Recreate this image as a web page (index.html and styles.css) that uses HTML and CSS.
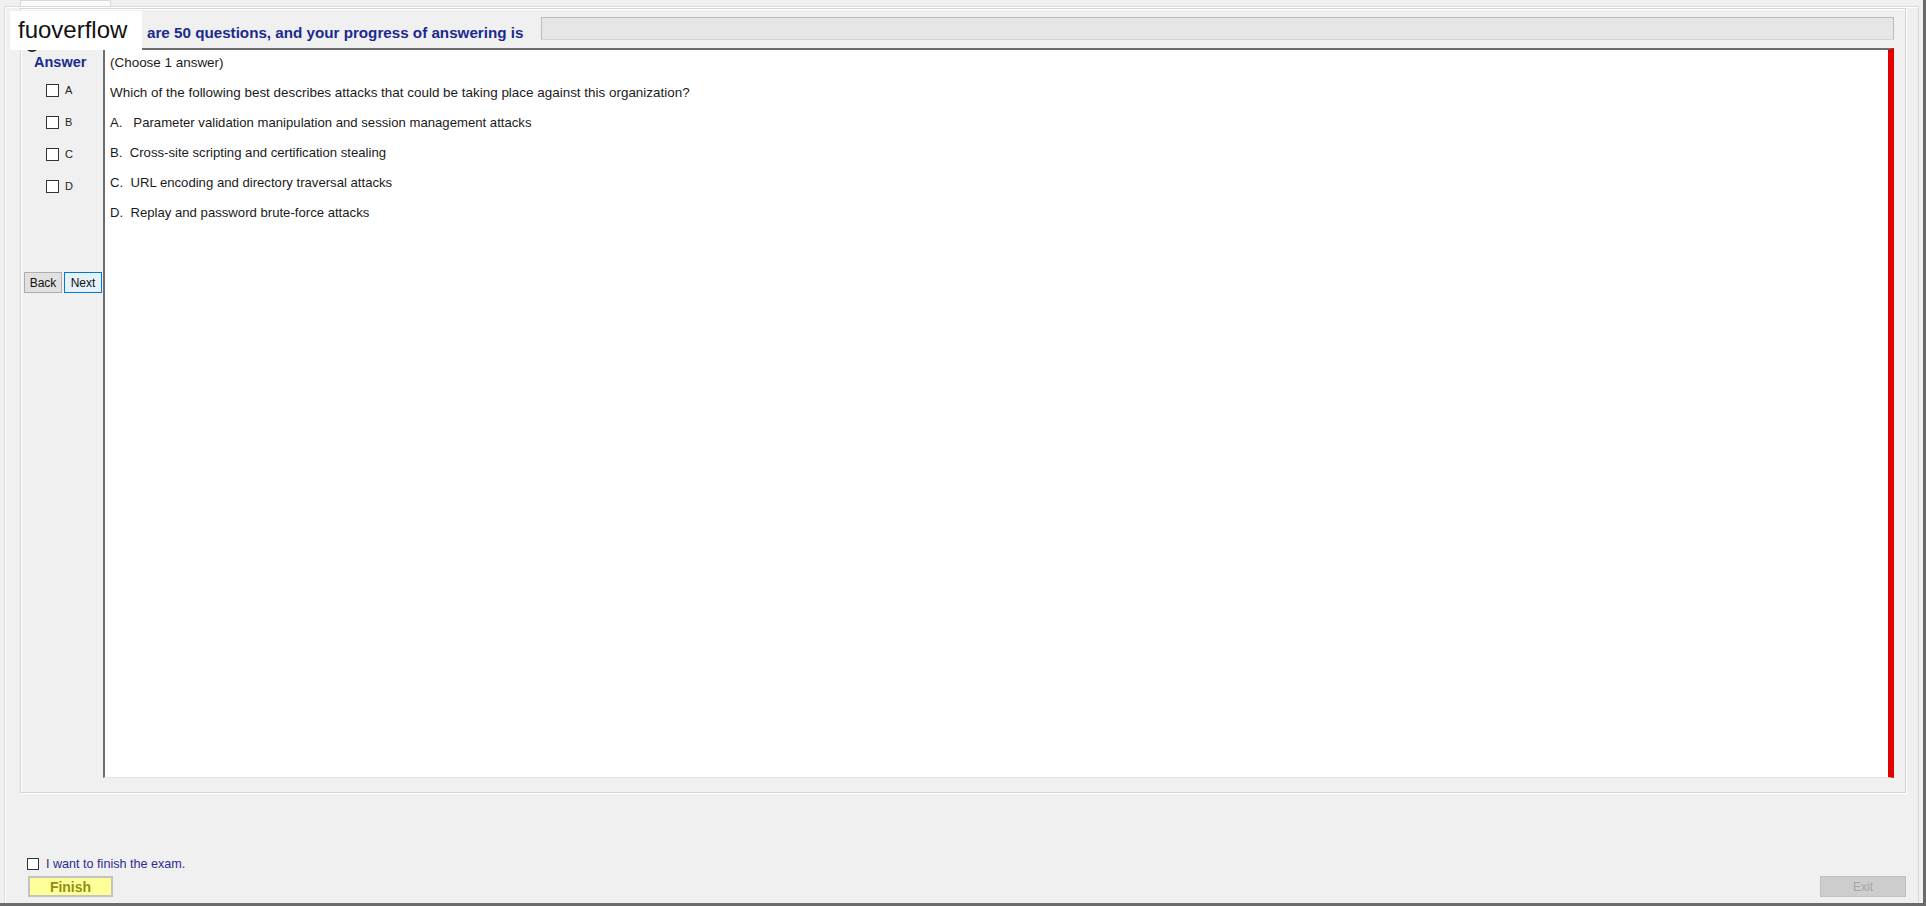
FILE: index.html
```html
<!DOCTYPE html>
<html lang="en">
<head>
    <meta charset="UTF-8">
    <title>Exam</title>
    <link rel="stylesheet" href="styles.css">
</head>
<body>
    <div class="window">
        <div class="tabstrip">
            <div class="tab"></div>
        </div>
        <div class="tabpage">
            <div class="group">
                <div class="header">
                    <span class="icon"></span>
                    <span class="title">are 50 questions, and your progress of answering is</span>
                    <div class="progress"></div>
                </div>
                <div class="body">
                    <div class="side">
                        <div class="answer">Answer</div>
                        <div class="opt"><span class="box"></span><span>A</span></div>
                        <div class="opt"><span class="box"></span><span>B</span></div>
                        <div class="opt"><span class="box"></span><span>C</span></div>
                        <div class="opt"><span class="box"></span><span>D</span></div>
                        <div class="nav">
                            <button class="btn">Back</button>
                            <button class="btn next">Next</button>
                        </div>
                    </div>
                    <div class="question">
                        <p>(Choose 1 answer)</p>
                        <p>Which of the following best describes attacks that could be taking place against this organization?</p>
                        <p class="choice">A.   Parameter validation manipulation and session management attacks</p>
                        <p class="choice">B.  Cross-site scripting and certification stealing</p>
                        <p class="choice">C.  URL encoding and directory traversal attacks</p>
                        <p class="choice">D.  Replay and password brute-force attacks</p>
                    </div>
                </div>
            </div>
            <div class="footer">
                <div class="confirm"><span class="box small"></span><span>I want to finish the exam.</span></div>
                <div class="actions">
                    <button class="finish">Finish</button>
                    <button class="exit">Exit</button>
                </div>
            </div>
        </div>
        <div class="mark">fuoverflow</div>
    </div>
</body>
</html>
```

FILE: styles.css
```css
*{
    box-sizing: border-box;
}
body{
    margin: 0;
    background: #f0f0f0;
    font-family: "Liberation Sans", Arial, sans-serif;
}
.window{
    position: relative;
    display: flex;
    flex-direction: column;
    width: 1926px;
    height: 906px;
    border-right: 3px solid #6b6b6b;
    border-bottom: 3px solid #6b6b6b;
}
.tabstrip{
    height: 6px;
    padding-left: 20px;
}
.tab{
    width: 91px;
    height: 6px;
    background: #fafafa;
    border: 1px solid #d9d9d9;
    border-bottom: none;
}
.tabpage{
    flex: 1;
    display: flex;
    flex-direction: column;
    margin: 0 4px 0 4px;
    padding: 1px 12px 0 15px;
    border-top: 1px solid #d9d9d9;
    border-left: 1px solid #d9d9d9;
    border-right: 1px solid #d9d9d9;
    box-shadow: inset 1px 1px #fff;
}
.group{
    height: 785px;
    display: flex;
    flex-direction: column;
    border: 1px solid #d5d5d5;
    box-shadow: inset 1px 1px #fff, 1px 1px #fff;
}
.header{
    height: 39px;
    display: flex;
    align-items: center;
    padding-left: 3px;
}
.icon{
    align-self: flex-end;
    width: 14px;
    height: 14px;
    margin: 0 0 -4px 1px;
    border-radius: 50%;
    background: #2b2b2b;
}
.title{
    margin: 8px 0 0 108px;
    color: #1b2a8f;
    font-weight: bold;
    font-size: 15.2px;
}
.progress{
    flex: 1;
    height: 23px;
    margin: 0 11px 0 18px;
    background: #e6e6e6;
    border: 1px solid #bcbcbc;
    border-bottom-color: #d4d4d4;
}
.body{
    flex: 1;
    display: flex;
    padding-bottom: 14px;
}
.side{
    width: 82px;
    padding-top: 7px;
}
.answer{
    color: #1b2a8f;
    font-weight: bold;
    font-size: 14.5px;
    line-height: 15px;
    padding-left: 13px;
    margin-bottom: 4px;
}
.opt{
    height: 32px;
    display: flex;
    align-items: center;
    gap: 6px;
    padding-left: 25px;
    font-size: 11px;
    color: #222;
}
.box{
    width: 13px;
    height: 13px;
    background: #fff;
    border: 1px solid #333;
}
.box.small{
    width: 12px;
    height: 12px;
}
.nav{
    display: flex;
    gap: 2px;
    margin: 70px 0 0 3px;
}
.btn{
    width: 38px;
    height: 21px;
    padding: 0;
    font-family: inherit;
    font-size: 12px;
    color: #111;
    background: #e1e1e1;
    border: 1px solid #adadad;
}
.btn.next{
    background: #e5f1fb;
    border-color: #0078d7;
}
.question{
    flex: 1;
    margin-right: 11px;
    padding: 5px 0 0 5px;
    background: #fff;
    border-top: 2px solid #6d6d6d;
    border-left: 2px solid #6d6d6d;
    border-bottom: 1px solid #e3e3e3;
    border-right: 6px solid #e10000;
}
.question p{
    margin: 0 0 14px;
    font-size: 13.45px;
    line-height: 16px;
    color: #1a1a1a;
    white-space: pre;
}
.question .choice{
    font-size: 13.15px;
}
.footer{
    flex: 1;
    display: flex;
    flex-direction: column;
    justify-content: flex-end;
    padding-bottom: 6px;
}
.confirm{
    display: flex;
    align-items: center;
    gap: 7px;
    height: 14px;
    margin: 0 0 5px 7px;
    font-size: 12.6px;
    color: #2e2a94;
}
.actions{
    display: flex;
    justify-content: space-between;
}
.finish{
    width: 85px;
    height: 21px;
    margin-left: 8px;
    padding: 0;
    font-family: inherit;
    font-size: 14px;
    font-weight: bold;
    color: #8f8f14;
    background: #ffff99;
    border: 2px solid #c3c3c3;
}
.exit{
    width: 86px;
    height: 21px;
    padding: 0;
    font-family: inherit;
    font-size: 12px;
    color: #a5a5a5;
    background: #cdcdcd;
    border: 1px solid #c0c0c0;
}
.mark{
    position: absolute;
    left: 10px;
    top: 11px;
    width: 132px;
    height: 39px;
    padding: 5px 0 0 8px;
    background: #fff;
    font-size: 24px;
    color: #111;
}
```
